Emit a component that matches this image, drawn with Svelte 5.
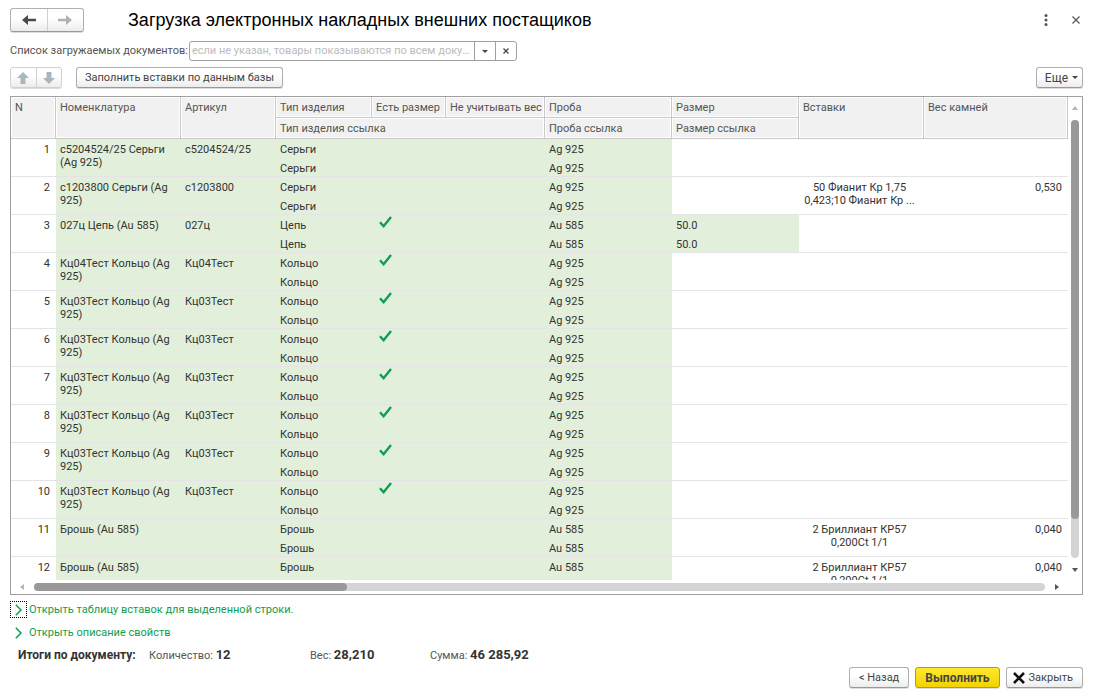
<script>
  const ring = (n) => ({ n, name: 'Кц03Тест Кольцо (Ag 925)', art: 'Кц03Тест', type: 'Кольцо', sized: true, probe: 'Ag 925' });
  const brooch = (n) => ({ n, name: 'Брошь (Au 585)', art: '', type: 'Брошь', probe: 'Au 585', inserts: ['2 Бриллиант КР57', '0,200Ct 1/1'], weight: '0,040' });

  const rows = [
    { n: 1, name: 'с5204524/25 Серьги (Ag 925)', art: 'с5204524/25', type: 'Серьги', probe: 'Ag 925' },
    { n: 2, name: 'с1203800 Серьги (Ag 925)', art: 'с1203800', type: 'Серьги', probe: 'Ag 925', inserts: ['50 Фианит Кр 1,75', '0,423;10 Фианит Кр ...'], weight: '0,530' },
    { n: 3, name: '027ц Цепь (Au 585)', art: '027ц', type: 'Цепь', sized: true, probe: 'Au 585', size: '50.0' },
    { n: 4, name: 'Кц04Тест Кольцо (Ag 925)', art: 'Кц04Тест', type: 'Кольцо', sized: true, probe: 'Ag 925' },
    ring(5), ring(6), ring(7), ring(8), ring(9), ring(10),
    brooch(11), brooch(12)
  ];
</script>

<main class="window">
  <header class="titlebar">
    <div class="pair nav">
      <button aria-label="Назад по истории">
        <svg width="14" height="12" viewBox="0 0 14 12"><path d="M0 6 6 1v3.8h8v2.4H6V11z" fill="#4a4a4a" /></svg>
      </button>
      <button aria-label="Вперед по истории">
        <svg width="14" height="12" viewBox="0 0 14 12"><path d="M14 6 8 1v3.8H0v2.4h8V11z" fill="#b0b0b0" /></svg>
      </button>
    </div>
    <h1>Загрузка электронных накладных внешних постащиков</h1>
    <button class="plain" aria-label="Меню">
      <svg width="4" height="12" viewBox="0 0 4 12" fill="#555"><circle cx="2" cy="1.6" r="1.5" /><circle cx="2" cy="6" r="1.5" /><circle cx="2" cy="10.4" r="1.5" /></svg>
    </button>
    <button class="plain" aria-label="Закрыть окно">
      <svg width="8" height="8" viewBox="0 0 8 8"><path d="M.5.5l7 7M7.5.5l-7 7" stroke="#555" stroke-width="1.2" /></svg>
    </button>
  </header>

  <div class="filter">
    <label for="docs">Список загружаемых документов:</label>
    <div class="field">
      <input id="docs" type="text" placeholder="если не указан, товары показываются по всем документам" />
      <button aria-label="Выбрать"><svg width="6" height="3" viewBox="0 0 6 3"><path d="M0 0h6L3 3z" fill="#444" /></svg></button>
      <button aria-label="Очистить"><svg width="6" height="6" viewBox="0 0 6 6"><path d="M.5.5l5 5M5.5.5l-5 5" stroke="#444" stroke-width="1.2" /></svg></button>
    </div>
  </div>

  <div class="toolbar">
    <div class="pair move">
      <button aria-label="Переместить вверх"><svg width="12" height="12" viewBox="0 0 12 12"><path d="M6 0l6 6H8.500v6h-5V6H0z" fill="#a9b6bd" /></svg></button>
      <button aria-label="Переместить вниз"><svg width="12" height="12" viewBox="0 0 12 12"><path d="M6 12l6-6H8.500V0h-5v6H0z" fill="#a9b6bd" /></svg></button>
    </div>
    <button class="btn">Заполнить вставки по данным базы</button>
    <button class="btn more">Еще <svg width="6" height="3" viewBox="0 0 6 3"><path d="M0 0h6L3 3z" fill="#444" /></svg></button>
  </div>

  <section class="grid">
    <div class="viewport">
      <table>
        <colgroup>
          <col class="w-n" /><col class="w-name" /><col class="w-art" /><col class="w-type" /><col class="w-sized" />
          <col class="w-skip" /><col class="w-probe" /><col class="w-probe" /><col class="w-name" /><col />
        </colgroup>
        <thead>
          <tr>
            <th rowspan="2">N</th>
            <th rowspan="2">Номенклатура</th>
            <th rowspan="2">Артикул</th>
            <th>Тип изделия</th>
            <th>Есть размер</th>
            <th>Не учитывать вес</th>
            <th>Проба</th>
            <th>Размер</th>
            <th rowspan="2">Вставки</th>
            <th rowspan="2">Вес камней</th>
          </tr>
          <tr>
            <th colspan="3">Тип изделия ссылка</th>
            <th>Проба ссылка</th>
            <th>Размер ссылка</th>
          </tr>
        </thead>
        {#each rows as r (r.n)}
          <tbody>
            <tr>
              <td rowspan="2" class="end line">{r.n}</td>
              <td rowspan="2" class="fill line">{r.name}</td>
              <td rowspan="2" class="fill line">{r.art}</td>
              <td class="fill">{r.type}</td>
              <td class="fill mark">
                {#if r.sized}
                  <svg width="13" height="12" viewBox="0 0 13 12" role="img" aria-label="Да"><path d="M1 6.200l3.600 4L12 1" fill="none" stroke="#0f9d4f" stroke-width="2.400" /></svg>
                {/if}
              </td>
              <td class="fill"></td>
              <td class="fill">{r.probe}</td>
              <td class:fill={r.size}>{r.size ?? ''}</td>
              <td rowspan="2" class="inserts line">
                {#each r.inserts ?? [] as part}<div>{part}</div>{/each}
              </td>
              <td rowspan="2" class="end line">{r.weight ?? ''}</td>
            </tr>
            <tr>
              <td colspan="3" class="fill line">{r.type}</td>
              <td class="fill line">{r.probe}</td>
              <td class="line" class:fill={r.size}>{r.size ?? ''}</td>
            </tr>
          </tbody>
        {/each}
      </table>
    </div>
    <div class="vbar">
      <svg width="6" height="4" viewBox="0 0 6 4"><path d="M0 4h6L3 0z" fill="#b5b5b5" /></svg>
      <div class="track"><div class="thumb"></div></div>
      <svg width="6" height="4" viewBox="0 0 6 4"><path d="M0 0h6L3 4z" fill="#555" /></svg>
    </div>
    <div class="hbar">
      <svg width="4" height="6" viewBox="0 0 4 6"><path d="M4 0v6L0 3z" fill="#b5b5b5" /></svg>
      <div class="track"><div class="thumb"></div></div>
      <svg width="4" height="6" viewBox="0 0 4 6"><path d="M0 0v6l4-3z" fill="#555" /></svg>
    </div>
  </section>

  <div class="links">
    <button class="link"><span class="chev focus"><svg width="7" height="12" viewBox="0 0 7 12"><path d="M.8.800 6 6 .8 11.200" fill="none" stroke="#0f9d4f" stroke-width="1.500" /></svg></span>Открыть таблицу вставок для выделенной строки.</button>
    <button class="link"><span class="chev"><svg width="7" height="12" viewBox="0 0 7 12"><path d="M.8.800 6 6 .8 11.200" fill="none" stroke="#0f9d4f" stroke-width="1.500" /></svg></span>Открыть описание свойств</button>
  </div>

  <div class="totals">
    <strong>Итоги по документу:</strong>
    <span class="total wide">Количество: <b>12</b></span>
    <span class="total">Вес: <b>28,210</b></span>
    <span class="total">Сумма: <b>46 285,92</b></span>
  </div>

  <footer>
    <button class="btn">&lt; Назад</button>
    <button class="btn primary">Выполнить</button>
    <button class="btn close"><svg width="12" height="12" viewBox="0 0 12 12"><path d="M1 1l10 10M11 1 1 11" stroke="#111" stroke-width="2.600" /></svg>Закрыть</button>
  </footer>
</main>

<style>
  :global(body) { background: #fff; }
  .window {
    box-sizing: border-box;
    height: 100vh;
    min-height: 400px;
    padding: 7px 18px 12px 10px;
    display: flex;
    flex-direction: column;
    font: 11px/14px Roboto, "Liberation Sans", sans-serif;
    color: #555;
  }
  button, input { font: inherit; color: inherit; margin: 0; }
  button {
    padding: 0;
    border: 0;
    background: none;
    display: flex;
    align-items: center;
    justify-content: center;
  }
  svg { display: block; flex: none; }

  .titlebar { display: flex; align-items: center; height: 25px; }
  h1 {
    flex: 1;
    margin: 0 0 0 44px;
    font: 18px/24px "Liberation Sans", Arial, sans-serif;
    color: #000;
    white-space: nowrap;
  }
  .plain { width: 30px; height: 24px; }
  .plain:last-child { margin-right: -8px; }

  .pair, .btn {
    box-sizing: border-box;
    border: 1px solid #b0b0b0;
    border-bottom-color: #999;
    border-radius: 3px;
    background: linear-gradient(#fff 40%, #ececec);
    box-shadow: 0 1px 0 #ddd;
  }
  .pair { display: flex; }
  .pair button { flex: 1; }
  .pair button + button { border-left: 1px solid #d0d0d0; }
  .nav { width: 74px; height: 24px; }
  .move { width: 52px; height: 21px; border-color: #d0d0d0; }
  .btn { height: 21px; padding: 0 8px; color: #444; white-space: nowrap; }

  .filter { display: flex; align-items: center; gap: 1px; margin-top: 9px; }
  .field {
    box-sizing: border-box;
    display: flex;
    width: 328px;
    height: 20px;
    border: 1px solid #a0a0a0;
    border-radius: 3px;
  }
  .field input {
    flex: 1;
    min-width: 0;
    padding: 0 4px 0 2px;
    border: 0;
    outline: 0;
    background: none;
    text-overflow: ellipsis;
  }
  .field input::placeholder { color: #bbb; opacity: 1; }
  .field button { width: 21px; border-left: 1px solid #a0a0a0; }

  .toolbar { display: flex; gap: 14px; margin: 6px 0 8px; }
  .more { margin-left: auto; gap: 4px; padding-right: 4px; font-size: 12px; }

  .grid {
    flex: 1;
    min-height: 0;
    display: grid;
    grid-template: minmax(0, 1fr) 14px / minmax(0, 1fr) 14px;
    border: 1px solid #a0a0a0;
  }
  .viewport { overflow: hidden; }
  table { width: 100%; table-layout: fixed; border-collapse: separate; border-spacing: 0; }
  .w-n { width: 45px; }
  .w-name { width: 125px; }
  .w-art { width: 95px; }
  .w-type { width: 96px; }
  .w-sized { width: 74px; }
  .w-skip { width: 99px; }
  .w-probe { width: 127px; }
  th, td { box-sizing: border-box; padding: 4px 4px 0; vertical-align: top; text-align: left; line-height: 13px; }
  th {
    height: 21px;
    font-weight: 400;
    white-space: nowrap;
    background: #f1f1f1;
    border-right: 1px solid #c8c8c8;
    border-bottom: 1px solid #c8c8c8;
    box-shadow: inset 0 0 0 1px #fff;
  }
  td { height: 19px; color: #333; }
  .line { border-bottom: 1px solid #e4e4e6; }
  .fill { background: #e2efdb; }
  .end { padding-right: 6px; text-align: right; }
  .mark { padding: 1px 7px 0; }
  .inserts { padding-right: 8px; text-align: center; white-space: nowrap; }

  .vbar { display: flex; flex-direction: column; align-items: center; gap: 10px; padding: 9px 0 8px; }
  .vbar .track { flex: 1; width: 8px; }
  .vbar .thumb { height: 91%; }
  .hbar { grid-column: 1 / -1; display: flex; align-items: center; gap: 10px; padding: 0 23px 0 9px; }
  .hbar .track { flex: 1; height: 8px; }
  .hbar .thumb { width: 31%; height: 100%; }
  .track { border-radius: 4px; background: #d4d4d4; }
  .thumb { border-radius: 4px; background: #999; }

  .links { display: flex; flex-direction: column; align-items: flex-start; gap: 6px; margin-top: 6px; }
  .link { gap: 2px; color: #0f9d4f; }
  .chev {
    box-sizing: border-box;
    width: 17px;
    height: 17px;
    display: flex;
    align-items: center;
    justify-content: center;
    border: 1px dotted transparent;
  }
  .focus { border-color: #000; }

  .totals { display: flex; align-items: baseline; height: 14px; margin: 7px 0 5px 8px; color: #333; }
  .totals strong { width: 131px; font-size: 12px; white-space: nowrap; }
  .total { width: 120px; color: #555; white-space: nowrap; }
  .total.wide { width: 161px; }
  .total b { font-size: 13px; color: #333; }

  footer { display: flex; justify-content: flex-end; gap: 6px; }
  footer .btn { padding: 0 9px; }
  footer .primary {
    border-color: #b89f00;
    background: linear-gradient(#ffe82e, #f2d200);
    font-size: 12px;
    font-weight: 700;
  }
  footer .close { gap: 4px; padding-left: 6px; }
</style>
